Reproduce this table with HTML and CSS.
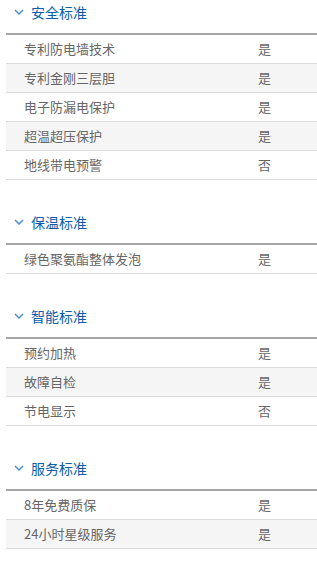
FILE: index.html
```html
<!DOCTYPE html>
<html lang="zh-CN">
<head>
<meta charset="utf-8">
<title>标准</title>
<link rel="stylesheet" href="styles.css">
</head>
<body>
<div class="page">
  <section class="group">
    <h2 class="group-title"><svg class="chev" viewBox="0 0 10 6" width="10" height="6"><path d="M1 1 L5 5 L9 1" fill="none" stroke="#4a8fd6" stroke-width="1.5"/></svg>安全标准</h2>
    <div class="rows">
      <div class="row"><span>专利防电墙技术</span><span>是</span></div>
      <div class="row alt"><span>专利金刚三层胆</span><span>是</span></div>
      <div class="row"><span>电子防漏电保护</span><span>是</span></div>
      <div class="row alt"><span>超温超压保护</span><span>是</span></div>
      <div class="row"><span>地线带电预警</span><span>否</span></div>
    </div>
  </section>
  <section class="group">
    <h2 class="group-title"><svg class="chev" viewBox="0 0 10 6" width="10" height="6"><path d="M1 1 L5 5 L9 1" fill="none" stroke="#4a8fd6" stroke-width="1.5"/></svg>保温标准</h2>
    <div class="rows">
      <div class="row"><span>绿色聚氨酯整体发泡</span><span>是</span></div>
    </div>
  </section>
  <section class="group">
    <h2 class="group-title"><svg class="chev" viewBox="0 0 10 6" width="10" height="6"><path d="M1 1 L5 5 L9 1" fill="none" stroke="#4a8fd6" stroke-width="1.5"/></svg>智能标准</h2>
    <div class="rows">
      <div class="row"><span>预约加热</span><span>是</span></div>
      <div class="row alt"><span>故障自检</span><span>是</span></div>
      <div class="row"><span>节电显示</span><span>否</span></div>
    </div>
  </section>
  <section class="group">
    <h2 class="group-title"><svg class="chev" viewBox="0 0 10 6" width="10" height="6"><path d="M1 1 L5 5 L9 1" fill="none" stroke="#4a8fd6" stroke-width="1.5"/></svg>服务标准</h2>
    <div class="rows">
      <div class="row"><span>8年免费质保</span><span>是</span></div>
      <div class="row alt"><span>24小时星级服务</span><span>是</span></div>
    </div>
  </section>
</div>
</body>
</html>
```

FILE: styles.css
```css
html, body {
  margin: 0;
  padding: 0;
  background: #fff;
}
body {
  font-family: "Noto Sans CJK SC", "Noto Sans", sans-serif;
}
.page {
  padding-left: 6px;
}
.group {
  margin-top: 20px;
}
.group:first-child {
  margin-top: 0;
}
.group-title {
  display: flex;
  align-items: center;
  margin: 0;
  padding: 11px 0 10px 8px;
  height: 22px;
  font-size: 14px;
  font-weight: normal;
  line-height: 22px;
  color: #0a5cad;
  border-bottom: 2px solid #a6a6a6;
}
.group:first-child .group-title {
  padding-top: 1px;
}
.chev {
  margin-right: 7px;
  flex: none;
}
.row {
  display: grid;
  grid-template-columns: 234px 1fr;
  padding-left: 18px;
  height: 28px;
  line-height: 28px;
  font-size: 13px;
  color: #666;
  border-bottom: 1px solid #dcdcdc;
}
.row.alt {
  background: #f5f5f5;
}
```
